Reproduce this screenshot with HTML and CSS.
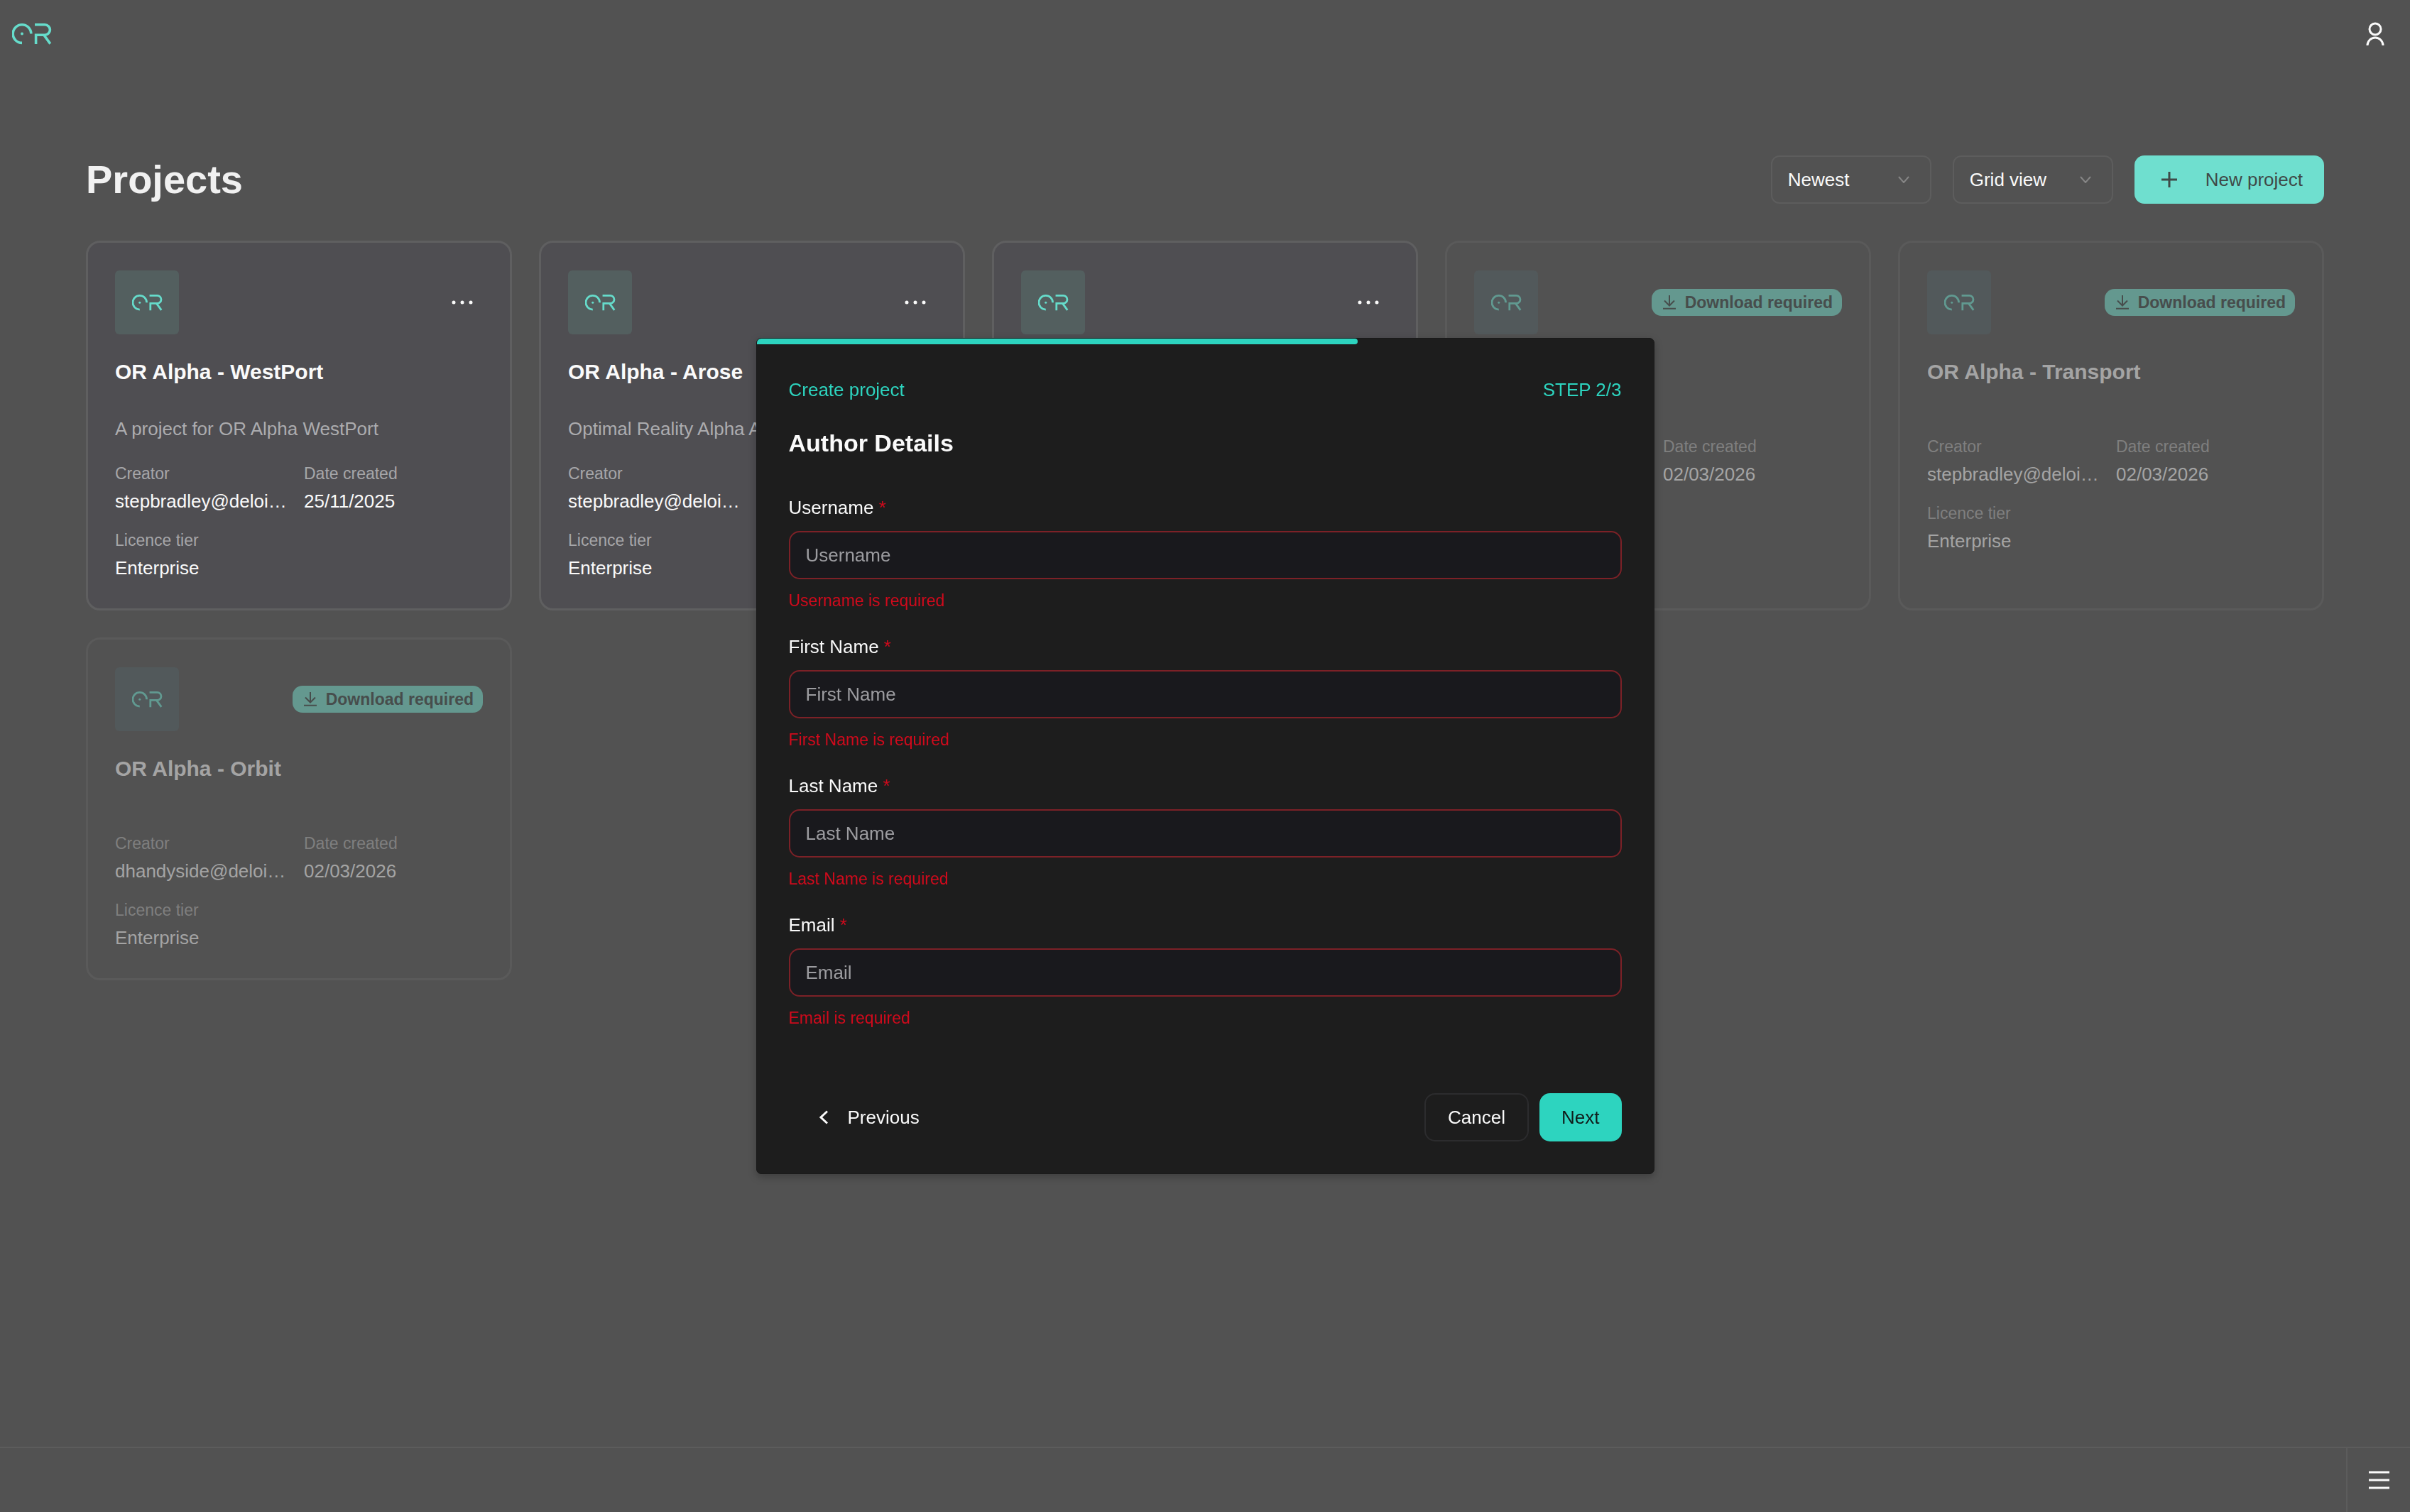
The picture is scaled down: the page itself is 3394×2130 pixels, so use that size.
FILE: index.html
```html
<!DOCTYPE html>
<html lang="en">
<head>
    <meta charset="UTF-8">
    <meta name="viewport" content="width=device-width, initial-scale=1.0">
    <title>Projects</title>
    <link rel="stylesheet" href="styles.css">
</head>
<body>

    <svg class="sprite" aria-hidden="true">
        <symbol id="logo" viewBox="0 0 56 30">
            <g fill="none" stroke="currentColor" stroke-width="3.6">
                <path d="M26.8 14.6A12.8 12.8 0 1 0 14 27.4"/>
                <path d="M32 1.8H46.2a7.1 7.1 0 0 1 0 14.4H33.6V29"/>
                <path d="M44.8 16.2L53.8 28.6"/>
            </g>
            <circle cx="14" cy="14.6" r="2" fill="currentColor"/>
        </symbol>
        <symbol id="chevron" viewBox="0 0 16 10">
            <path d="M1 1L8 9L15 1" fill="none" stroke="currentColor" stroke-width="2"/>
        </symbol>
        <symbol id="download" viewBox="0 0 18 20">
            <path d="M9 0V14M2 7.5L9 14.5L16 7.5M0 18.8H18" fill="none" stroke="currentColor" stroke-width="2"/>
        </symbol>
        <symbol id="dots" viewBox="0 0 30 6">
            <g fill="currentColor">
                <circle cx="3" cy="3" r="2.5"/>
                <circle cx="15" cy="3" r="2.5"/>
                <circle cx="27" cy="3" r="2.5"/>
            </g>
        </symbol>
    </svg>

    <header class="topbar">
        <a href="#" class="brand" aria-label="Home"><svg><use href="#logo"/></svg></a>
        <button type="button" class="icon-button user-button" aria-label="Account">
            <svg viewBox="0 0 26 34">
                <g fill="none" stroke="currentColor" stroke-width="3">
                    <circle cx="13" cy="10" r="8"/>
                    <path d="M2 33a11 11 0 0 1 22 0"/>
                </g>
            </svg>
        </button>
    </header>

    <main class="content">
        <div class="toolbar">
            <h1>Projects</h1>
            <div class="actions">
                <div class="select">
                    <select aria-label="Sort by">
                        <option>Newest</option>
                    </select>
                    <svg><use href="#chevron"/></svg>
                </div>
                <div class="select">
                    <select aria-label="View">
                        <option>Grid view</option>
                    </select>
                    <svg><use href="#chevron"/></svg>
                </div>
                <button type="button" class="new-project">
                    <svg viewBox="0 0 22 22"><path d="M11 0V22M0 11H22" stroke="currentColor" stroke-width="3"/></svg>
                    New project
                </button>
            </div>
        </div>

        <div class="grid">
            <article class="card">
                <div class="card-top">
                    <div class="tile"><svg><use href="#logo"/></svg></div>
                    <button type="button" class="icon-button more" aria-label="More"><svg><use href="#dots"/></svg></button>
                </div>
                <h2>OR Alpha - WestPort</h2>
                <p>A project for OR Alpha WestPort</p>
                <dl>
                    <div><dt>Creator</dt><dd>stepbradley@deloi…</dd></div>
                    <div><dt>Date created</dt><dd>25/11/2025</dd></div>
                    <div class="licence"><dt>Licence tier</dt><dd>Enterprise</dd></div>
                </dl>
            </article>

            <article class="card">
                <div class="card-top">
                    <div class="tile"><svg><use href="#logo"/></svg></div>
                    <button type="button" class="icon-button more" aria-label="More"><svg><use href="#dots"/></svg></button>
                </div>
                <h2>OR Alpha - Arose</h2>
                <p>Optimal Reality Alpha A</p>
                <dl>
                    <div><dt>Creator</dt><dd>stepbradley@deloi…</dd></div>
                    <div class="licence"><dt>Licence tier</dt><dd>Enterprise</dd></div>
                </dl>
            </article>

            <article class="card">
                <div class="card-top">
                    <div class="tile"><svg><use href="#logo"/></svg></div>
                    <button type="button" class="icon-button more" aria-label="More"><svg><use href="#dots"/></svg></button>
                </div>
            </article>

            <article class="card remote">
                <div class="card-top">
                    <div class="tile"><svg><use href="#logo"/></svg></div>
                    <span class="badge"><svg><use href="#download"/></svg>Download required</span>
                </div>
                <h2>OR Alpha</h2>
                <dl>
                    <div><dt>Creator</dt><dd>stepbradley@deloi…</dd></div>
                    <div><dt>Date created</dt><dd>02/03/2026</dd></div>
                    <div class="licence"><dt>Licence tier</dt><dd>Enterprise</dd></div>
                </dl>
            </article>

            <article class="card remote">
                <div class="card-top">
                    <div class="tile"><svg><use href="#logo"/></svg></div>
                    <span class="badge"><svg><use href="#download"/></svg>Download required</span>
                </div>
                <h2>OR Alpha - Transport</h2>
                <dl>
                    <div><dt>Creator</dt><dd>stepbradley@deloi…</dd></div>
                    <div><dt>Date created</dt><dd>02/03/2026</dd></div>
                    <div class="licence"><dt>Licence tier</dt><dd>Enterprise</dd></div>
                </dl>
            </article>

            <article class="card remote">
                <div class="card-top">
                    <div class="tile"><svg><use href="#logo"/></svg></div>
                    <span class="badge"><svg><use href="#download"/></svg>Download required</span>
                </div>
                <h2>OR Alpha - Orbit</h2>
                <dl>
                    <div><dt>Creator</dt><dd>dhandyside@deloi…</dd></div>
                    <div><dt>Date created</dt><dd>02/03/2026</dd></div>
                    <div class="licence"><dt>Licence tier</dt><dd>Enterprise</dd></div>
                </dl>
            </article>
        </div>
    </main>

    <footer class="bottombar">
        <button type="button" class="icon-button menu-button" aria-label="Menu">
            <svg viewBox="0 0 29 26"><path d="M0 2H29M0 13H29M0 24H29" stroke="currentColor" stroke-width="3"/></svg>
        </button>
    </footer>

    <div class="overlay">
        <form class="modal" role="dialog" aria-labelledby="modalTitle" novalidate>
            <div class="progress"><div class="progress-bar" style="width: 67%"></div></div>
            <div class="modal-body">
                <div class="modal-head">
                    <span>Create project</span>
                    <span>STEP 2/3</span>
                </div>
                <h2 id="modalTitle">Author Details</h2>

                <div class="fields">
                    <div class="field">
                        <label for="username">Username <span class="required">*</span></label>
                        <input type="text" id="username" placeholder="Username">
                        <p class="error">Username is required</p>
                    </div>
                    <div class="field">
                        <label for="firstName">First Name <span class="required">*</span></label>
                        <input type="text" id="firstName" placeholder="First Name">
                        <p class="error">First Name is required</p>
                    </div>
                    <div class="field">
                        <label for="lastName">Last Name <span class="required">*</span></label>
                        <input type="text" id="lastName" placeholder="Last Name">
                        <p class="error">Last Name is required</p>
                    </div>
                    <div class="field">
                        <label for="email">Email <span class="required">*</span></label>
                        <input type="email" id="email" placeholder="Email">
                        <p class="error">Email is required</p>
                    </div>
                </div>

                <div class="modal-actions">
                    <button type="button" class="previous">
                        <svg viewBox="0 0 12 20"><path d="M11 1.5L2 10L11 18.5" fill="none" stroke="currentColor" stroke-width="3"/></svg>
                        Previous
                    </button>
                    <button type="button" class="cancel">Cancel</button>
                    <button type="submit" class="next">Next</button>
                </div>
            </div>
        </form>
    </div>

</body>
</html>
```
FILE: styles.css
```css
* {
    box-sizing: border-box;
    margin: 0;
    padding: 0;
}
body {
    min-height: 100vh;
    display: flex;
    flex-direction: column;
    background-color: #525252;
    color: #fafafa;
    font-family: "Liberation Sans", Helvetica, Arial, sans-serif;
    font-size: 26px;
    line-height: 30px;
}
button, input, select {
    font: inherit;
    color: inherit;
}
button {
    border: none;
    background: none;
    cursor: pointer;
}
svg {
    display: block;
    flex-shrink: 0;
}
.sprite {
    position: absolute;
    width: 0;
    height: 0;
}
.icon-button {
    display: flex;
    align-items: center;
    justify-content: center;
}

/* top bar */
.topbar {
    display: flex;
    align-items: center;
    justify-content: space-between;
    height: 96px;
    padding: 0 36px 0 17px;
}
.brand {
    color: #66dccb;
}
.brand svg {
    width: 56px;
    height: 30px;
}
.user-button svg {
    width: 26px;
    height: 34px;
}

/* projects */
.content {
    flex: 1;
    padding: 123px 121px 0;
}
.toolbar {
    display: flex;
    align-items: center;
    justify-content: space-between;
    margin-bottom: 52px;
}
h1 {
    font-size: 56px;
    line-height: 68px;
    color: #f1f1f1;
}
.actions {
    display: flex;
    gap: 30px;
}
.select {
    position: relative;
    width: 226px;
}
.select select {
    width: 100%;
    height: 68px;
    padding: 0 22px;
    border: 2px solid #5d5d5d;
    border-radius: 12px;
    background: none;
    appearance: none;
}
.select svg {
    position: absolute;
    top: 29px;
    right: 31px;
    width: 16px;
    height: 10px;
    color: #868686;
    pointer-events: none;
}
.new-project {
    display: flex;
    align-items: center;
    gap: 40px;
    height: 68px;
    padding: 0 30px 0 38px;
    border-radius: 14px;
    background-color: #6fdfcf;
    color: #3f4a48;
}
.new-project svg {
    width: 22px;
    height: 22px;
}
.grid {
    display: grid;
    grid-template-columns: repeat(5, minmax(0, 1fr));
    gap: 38px;
}
.card {
    display: flex;
    flex-direction: column;
    padding: 39px 38px 42px;
    border: 3px solid #5f5f60;
    border-radius: 20px;
    background-color: #4f4e52;
}
.card-top {
    display: flex;
    align-items: center;
    justify-content: space-between;
    margin-bottom: 35px;
}
.tile {
    display: flex;
    align-items: center;
    justify-content: center;
    width: 90px;
    height: 90px;
    border-radius: 6px;
    background-color: #535f5f;
    color: #66dccb;
}
.tile svg {
    width: 43px;
    height: 23px;
}
.more {
    margin-right: 14px;
}
.more svg {
    width: 30px;
    height: 6px;
}
.card h2 {
    margin-bottom: 39px;
    font-size: 30px;
    line-height: 36px;
}
.card p {
    margin-top: 8px;
    color: #acacaf;
}
.card dl {
    display: grid;
    grid-template-columns: repeat(2, minmax(0, 1fr));
    gap: 26px 14px;
    margin-top: 34px;
}
.card .licence {
    grid-column: 1;
}
.card dt {
    margin-bottom: 10px;
    font-size: 23px;
    line-height: 28px;
    color: #a6a6a9;
}
.card dd {
    white-space: nowrap;
}
.card.remote {
    border-color: #5a5a5a;
    background: none;
    color: #a4a4a4;
}
.remote .tile {
    background-color: #52595b;
    color: #619a91;
}
.card.remote dt {
    color: #7f7f7f;
}
.badge {
    display: flex;
    align-items: center;
    gap: 13px;
    height: 38px;
    padding: 0 13px 0 16px;
    border-radius: 14px;
    background-color: #64988f;
    color: #474d4c;
    font-size: 23px;
    font-weight: bold;
}
.badge svg {
    width: 18px;
    height: 20px;
}

/* bottom bar */
.bottombar {
    display: flex;
    justify-content: flex-end;
    height: 92px;
    border-top: 2px solid #5c5c5c;
}
.menu-button {
    width: 90px;
    border-left: 2px solid #5c5c5c;
}
.menu-button svg {
    width: 29px;
    height: 26px;
}

/* create project modal */
.overlay {
    position: fixed;
    inset: 0;
    display: flex;
    align-items: center;
    justify-content: center;
}
.modal {
    width: 100%;
    max-width: 1265px;
    border: 1px solid #1a1a1a;
    border-radius: 7px;
    background-color: #1d1d1d;
    box-shadow: 0 4px 12px rgba(0, 0, 0, 0.25);
    overflow: hidden;
    line-height: 32px;
}
.progress-bar {
    height: 8px;
    border-radius: 0 4px 4px 0;
    background-color: #2dd4bf;
}
.modal-body {
    padding: 48px 45px 45px;
}
.modal-head {
    display: flex;
    justify-content: space-between;
    color: #2dd4bf;
}
.modal h2 {
    margin: 39px 0 55px;
    font-size: 34px;
    line-height: 40px;
}
.fields {
    display: flex;
    flex-direction: column;
    gap: 35px;
}
.field label {
    display: block;
    margin-bottom: 17px;
}
.required, .error {
    color: #d00a1c;
}
.field input {
    display: block;
    width: 100%;
    height: 68px;
    padding: 0 22px;
    border: 2px solid #7c2127;
    border-radius: 15px;
    background-color: #19191d;
}
.field input::placeholder {
    color: #9c9ca0;
}
.error {
    margin-top: 16px;
    font-size: 23px;
    line-height: 28px;
}
.modal-actions {
    display: flex;
    gap: 15px;
    margin-top: 92px;
}
.modal-actions button {
    height: 68px;
    padding: 0 31px;
    border-radius: 15px;
}
.modal-actions .previous {
    display: flex;
    align-items: center;
    gap: 28px;
    margin-right: auto;
    padding: 0 43px;
}
.previous svg {
    width: 12px;
    height: 20px;
}
.modal-actions .cancel {
    border: 2px solid #2c2c2e;
}
.modal-actions .next {
    background-color: #2dd4bf;
    color: #101c1a;
}
```
